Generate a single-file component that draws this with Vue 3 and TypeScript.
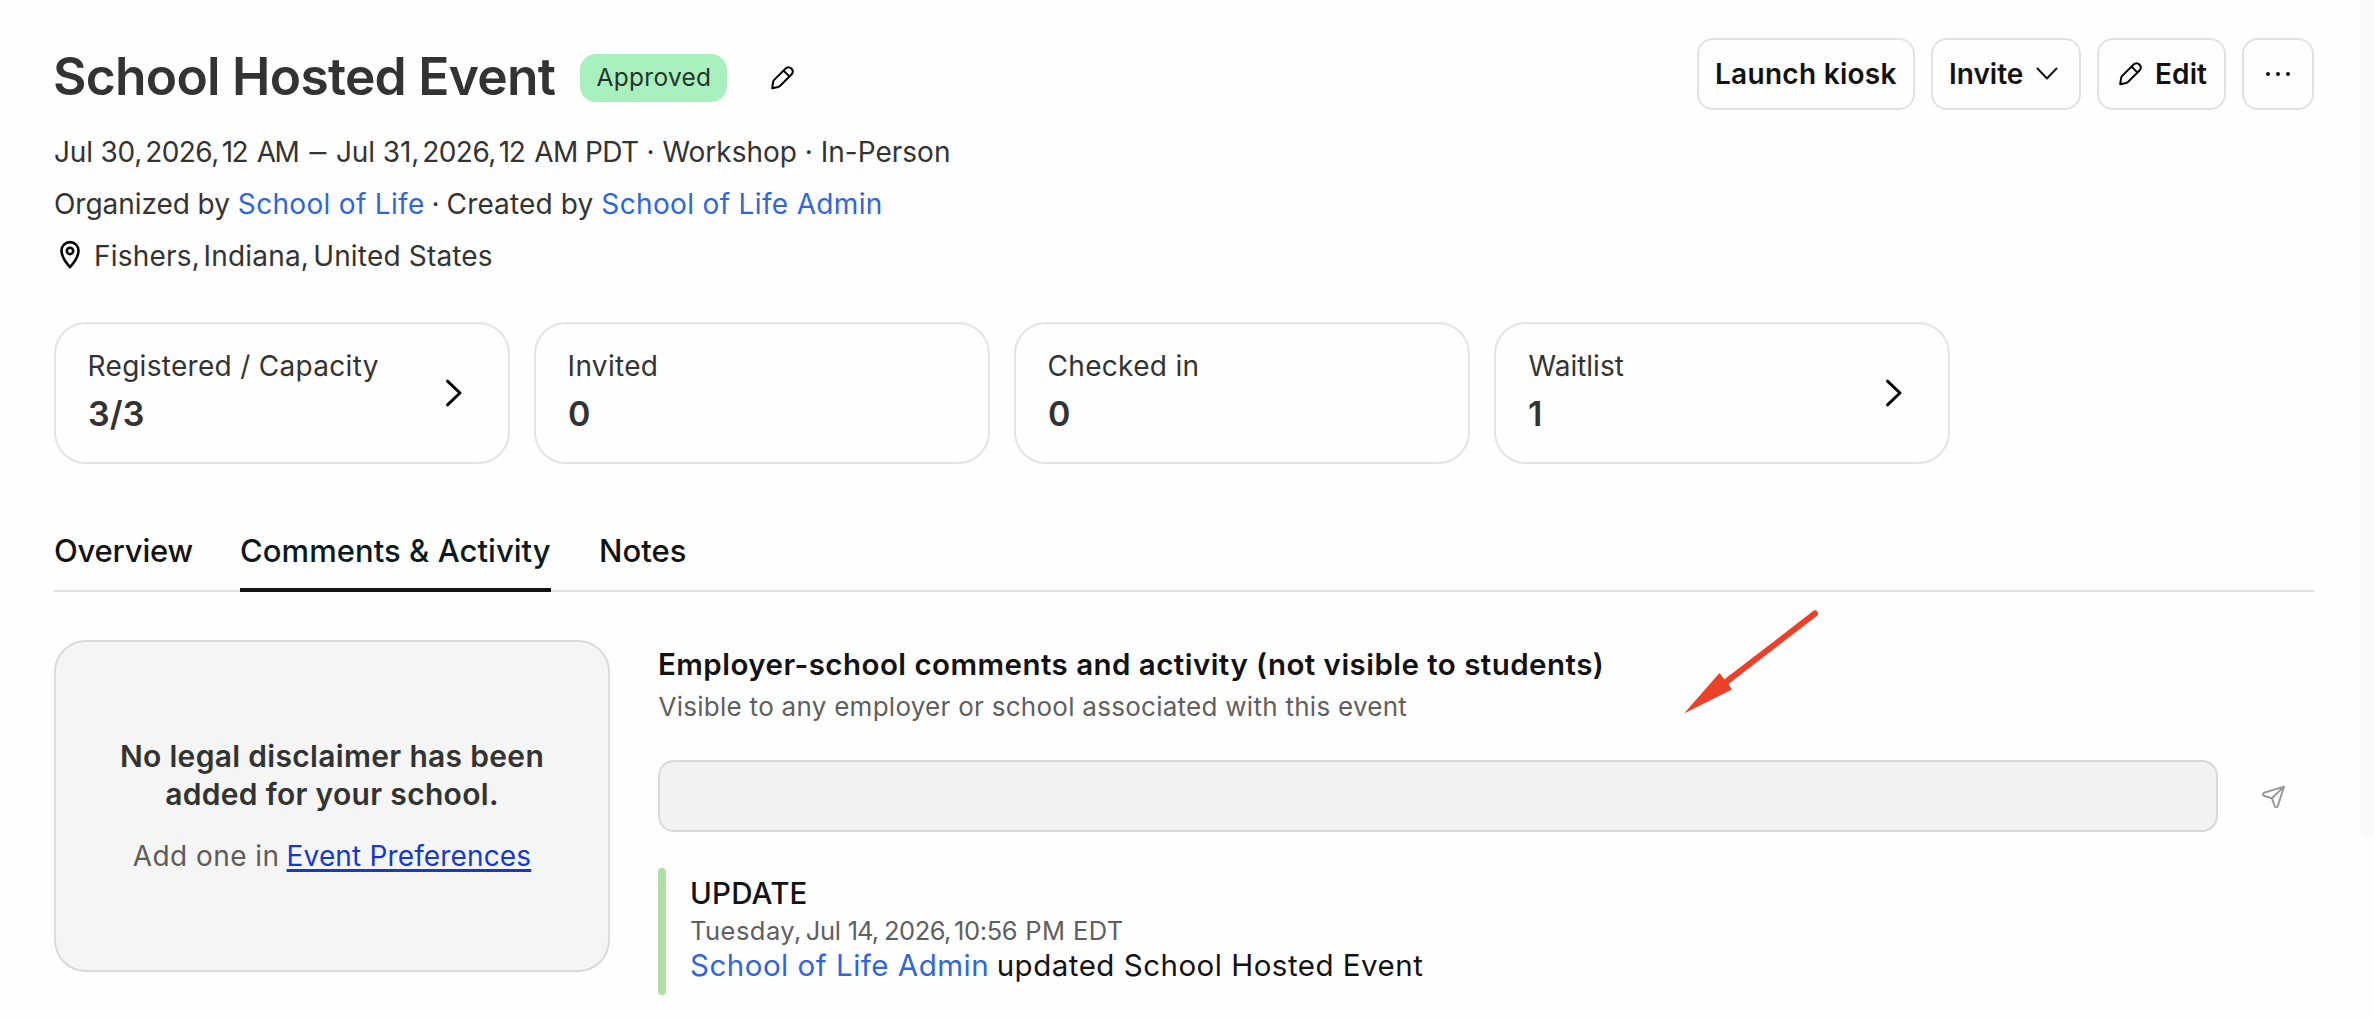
<script setup lang="ts">
interface Stat {
  label: string
  value: string
  link: boolean
}

const stats: Stat[] = [
  { label: 'Registered / Capacity', value: '3/3', link: true },
  { label: 'Invited', value: '0', link: false },
  { label: 'Checked in', value: '0', link: false },
  { label: 'Waitlist', value: '1', link: true },
]

const pencil =
  'M1.2 22.2 L2.1 16.2 Q2.3 14.8 3.2 13.9 L14.6 2.5 Q17.5 -.1 20.4 2.5 Q23.1 5.4 20.7 8.3 L9.2 19.7 Q8.2 20.6 7 20.9 Z M12.5 4.6 L18.6 10.6'
</script>

<template>
  <main class="page">
    <header class="header">
      <div>
        <div class="title-row">
          <h1>School Hosted Event</h1>
          <span class="badge">Approved</span>
          <svg class="pencil" width="24" height="24" viewBox="0 0 24 24"><path :d="pencil" /></svg>
        </div>
        <div class="meta when">
          <span class="d1">Jul 30,</span><span class="yr">2026,</span><span class="hr">12</span><span class="am">AM</span><span class="dash">–</span><span class="d2">Jul 31,</span><span class="yr">2026,</span><span class="hr">12</span><span class="zone">AM PDT</span><span class="rest">· Workshop · In-Person</span>
        </div>
        <div class="meta">
          <span class="by">Organized by</span><a class="org">School of Life</a><span class="dot">·</span><span class="created">Created by</span><a class="org admin">School of Life Admin</a>
        </div>
        <div class="meta place">
          <svg width="22" height="30" viewBox="0 0 22 30">
            <path d="M11 27.2 C8.5 24.4 2.5 17.5 2.5 10.6 A8.5 8.5 0 0 1 19.5 10.6 C19.5 17.5 13.5 24.4 11 27.2 Z" />
            <circle cx="11" cy="10.9" r="3.2" />
          </svg>
          <span class="city">Fishers,</span><span class="state">Indiana,</span><span class="country">United States</span>
        </div>
      </div>
      <div class="actions">
        <button class="btn launch">Launch kiosk</button>
        <button class="btn invite">
          <span>Invite</span>
          <svg width="22" height="14" viewBox="0 0 22 14"><path d="M1.5 1.5 L11 11.5 L20.5 1.5" /></svg>
        </button>
        <button class="btn edit">
          <svg class="pencil" width="24" height="24" viewBox="0 0 24 24"><path :d="pencil" /></svg>
          <span>Edit</span>
        </button>
        <button class="btn more" aria-label="More">
          <svg width="26" height="6" viewBox="0 0 26 6">
            <circle cx="3" cy="3" r="2" /><circle cx="13" cy="3" r="2" /><circle cx="23" cy="3" r="2" />
          </svg>
        </button>
      </div>
    </header>

    <section class="stats">
      <div v-for="s in stats" :key="s.label" class="stat">
        <div>
          <div class="label">{{ s.label }}</div>
          <div class="value">{{ s.value }}</div>
        </div>
        <svg v-if="s.link" width="18" height="28" viewBox="0 0 18 28"><path d="M2.5 2.2 L15 14 L2.5 25.8" /></svg>
      </div>
    </section>

    <nav class="tabs">
      <a class="tab overview">Overview</a>
      <a class="tab active">Comments &amp; Activity</a>
      <a class="tab">Notes</a>
    </nav>

    <div class="body">
      <aside class="disclaimer">
        <p class="strong">No legal disclaimer has been<br />added for your school.</p>
        <p class="hint"><span>Add one in</span><a>Event Preferences</a></p>
      </aside>
      <section class="comments">
        <h2>Employer-school comments and activity (not visible to students)</h2>
        <p class="sub">Visible to any employer or school associated with this event</p>
        <div class="compose">
          <div class="input"></div>
          <svg width="24" height="24" viewBox="0 0 24 24">
            <path d="M22 1.6 L2 7.8 Q.7 8.4 1.1 9.9 Q1.3 10.5 2 10.7 L9.8 13.2 L12.8 21.1 Q13.3 22.3 14.2 22.3 Q15.4 22.3 15.8 21 Z M22 1.6 L9.8 13.2" />
          </svg>
        </div>
        <article class="entry">
          <div class="kind">UPDATE</div>
          <div class="time">
            <span class="t-day">Tuesday,</span><span class="t-mon">Jul</span><span class="t-date">14,</span><span class="t-yr">2026,</span><span class="t-hr">10:56</span><span class="t-zone">PM EDT</span>
          </div>
          <div class="what"><a>School of Life Admin</a><span>updated School Hosted Event</span></div>
        </article>
      </section>
    </div>

    <div class="rail"></div>
    <svg class="arrow" width="140" height="110" viewBox="0 0 140 110">
      <path class="shaft" d="M133 8.5 L44 77" />
      <path class="head" d="M2 108.5 L37.5 68 L42.5 74.5 L46.5 79.5 L50 84.5 Z" />
    </svg>
  </main>
</template>

<style>
body {
  background: #fefefe;
}
</style>

<style scoped>
.page {
  position: relative;
  box-sizing: border-box;
  width: 2374px;
  height: 1018px;
  overflow: hidden;
  padding: 0 60px 0 54px;
  font-family: Inter, "Liberation Sans", sans-serif;
  color: #333;
}
h1, h2, p { margin: 0; }
svg { display: block; flex: none; fill: none; stroke-linecap: round; stroke-linejoin: round; overflow: visible; }
.pencil { stroke: #000; stroke-width: 2; }
.header { display: flex; justify-content: space-between; align-items: flex-start; height: 282px; }
.title-row { display: flex; align-items: flex-start; height: 77px; padding-top: 49px; box-sizing: content-box; }
h1 { width: 527px; margin-left: -1px; font-size: 51.5px; line-height: 54px; font-weight: 560; letter-spacing: -0.73px; white-space: nowrap; }
.badge { box-sizing: border-box; width: 147px; height: 48px; margin-top: 5px; padding-left: 16.5px; border-radius: 16px; background: #a8f0bd; color: #26352b; font-size: 24.5px; line-height: 47px; letter-spacing: 0.3px; }
.title-row .pencil { margin: 17px 0 0 44px; }
.meta { display: flex; height: 52px; line-height: 53px; font-size: 28px; white-space: nowrap; }
a { color: #2f66dd; text-decoration: none; }
.d1 { letter-spacing: -0.2px; }
.yr { margin-left: 3px; letter-spacing: -0.55px; }
.hr { margin-left: 3px; letter-spacing: -1.5px; }
.am { margin-left: 9.5px; letter-spacing: -1.4px; }
.dash { width: 14px; margin-left: 12.5px; transform: scaleX(1.2); }
.d2 { margin-left: 11px; letter-spacing: -0.1px; }
.zone { margin-left: 10px; letter-spacing: -0.6px; }
.rest { margin-left: 8px; letter-spacing: 0; }
.by { letter-spacing: -0.05px; }
.org { margin-left: 8px; letter-spacing: 0.32px; }
.admin { letter-spacing: 0.35px; }
.dot { width: 22px; text-align: center; }
.created { letter-spacing: 0.13px; }
.place svg { margin: 10px 13px 0 5px; stroke: #000; stroke-width: 2.6; }
.city { letter-spacing: 0.2px; }
.state { margin-left: 3.5px; letter-spacing: 0.2px; }
.country { margin-left: 4px; letter-spacing: 0.18px; }
.actions { display: flex; gap: 16px; padding-top: 38px; }
.btn { box-sizing: border-box; display: flex; align-items: center; height: 72px; margin: 0; padding: 0; border: 2px solid #e2e2e2; border-radius: 16px; background: none; color: #121212; font: 560 28px Inter, "Liberation Sans", sans-serif; }
.launch { width: 218px; padding-left: 16px; letter-spacing: 0.28px; white-space: nowrap; }
.invite { width: 150px; padding-left: 16px; }
.invite svg { margin-left: 13px; stroke: #121212; stroke-width: 2; }
.edit { width: 129px; padding-left: 20px; letter-spacing: 0.1px; }
.edit span { margin-left: 12px; }
.more { width: 72px; justify-content: center; }
.more svg { fill: #121212; }
.stats { display: flex; gap: 24px; margin-top: 40px; }
.stat { box-sizing: border-box; display: flex; justify-content: space-between; align-items: center; width: 456px; height: 142px; padding: 0 45px 0 31px; border: 2px solid #e3e3e3; border-radius: 32px; }
.stat > div { height: 90px; }
.stat svg { stroke: #000; stroke-width: 3; }
.label { padding-left: 0.6px; font-size: 28px; line-height: 37px; letter-spacing: 0.3px; }
.stat:last-child .label { padding-left: 1.5px; letter-spacing: 0; }
.value { padding-left: 1px; font-size: 34px; line-height: 57px; font-weight: 560; letter-spacing: 0.1px; }
.tabs { box-sizing: border-box; display: flex; gap: 48px; height: 63px; margin-top: 65px; border-bottom: 2px solid #e2e2e2; }
.tab { box-sizing: border-box; height: 63px; font-size: 31px; line-height: 44px; font-weight: 530; color: #121212; white-space: nowrap; }
.overview { width: 138px; letter-spacing: -0.2px; }
.active { width: 311px; color: #0b1a1d; border-bottom: 4px solid #121212; letter-spacing: 0.05px; }
.body { display: flex; gap: 48px; margin-top: 48px; }
.disclaimer { box-sizing: border-box; display: flex; flex-direction: column; justify-content: center; align-items: center; gap: 25px; width: 556px; height: 332px; padding-bottom: 1px; border: 2px solid #dadada; border-radius: 32px; background: #f5f5f5; text-align: center; }
.strong { font-size: 30px; line-height: 38px; font-weight: 560; letter-spacing: 0.31px; }
.hint { display: flex; gap: 7px; color: #5c5c5c; font-size: 28px; line-height: 36px; letter-spacing: 0.45px; }
.hint a { color: #1539cf; letter-spacing: 0.15px; text-decoration: underline; text-decoration-thickness: 3px; text-underline-offset: 3px; text-decoration-skip-ink: none; }
.comments { flex: 1; padding-top: 4px; }
h2 { font-size: 29.5px; line-height: 41px; font-weight: 560; letter-spacing: 0.46px; color: #121212; }
.sub { margin-top: 4px; font-size: 26px; line-height: 36px; letter-spacing: 0.27px; color: #5f5f5f; padding-left: 0.5px; }
.compose { display: flex; align-items: center; gap: 44px; margin-top: 35px; }
.compose svg { position: relative; top: 1px; stroke: #999; stroke-width: 2; }
.input { box-sizing: border-box; width: 1560px; height: 72px; border: 2px solid #d8d8d8; border-radius: 16px; background: #f2f2f2; }
.entry { position: relative; box-sizing: border-box; height: 127px; margin-top: 36px; padding: 8px 0 0 32px; }
.entry::before { content: ""; position: absolute; left: 0; top: 0; width: 8px; height: 127px; border-radius: 4px; background: #b0dfa5; }
.entry > div { display: flex; height: 36px; line-height: 35px; font-size: 29.5px; color: #121212; white-space: nowrap; }
.entry > .kind { font-weight: 530; letter-spacing: 0.2px; }
.entry > .time { font-size: 25.5px; line-height: 37px; color: #5f5f5f; }
.t-day { letter-spacing: 0.46px; }
.t-mon { margin-left: 4px; letter-spacing: -0.3px; }
.t-date { margin-left: 7px; letter-spacing: -0.99px; }
.t-yr { margin-left: 6px; letter-spacing: -0.54px; }
.t-hr { margin-left: 3px; letter-spacing: -0.33px; }
.t-zone { margin-left: 8px; letter-spacing: 0.4px; }
.what a { letter-spacing: 0.5px; }
.what span { margin-left: 7.5px; letter-spacing: 0.5px; }
.rail { position: absolute; top: 0; right: 0; width: 14px; height: 837px; border-radius: 0 0 8px 8px; background: #fafafa; }
.arrow { position: absolute; left: 1682px; top: 605px; }
.shaft { stroke: #ec4128; stroke-width: 6; }
.head { fill: #ec4128; }
</style>
